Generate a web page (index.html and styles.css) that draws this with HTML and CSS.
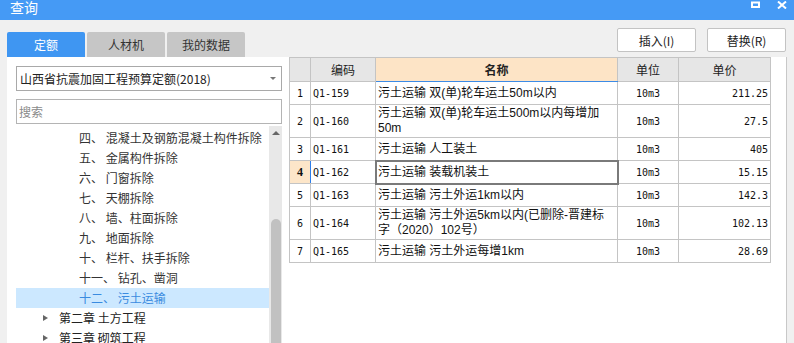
FILE: index.html
```html
<!DOCTYPE html>
<html lang="zh-CN">
<head>
    <meta charset="UTF-8">
    <title>查询</title>
    <link rel="stylesheet" href="styles.css">
</head>
<body>
    <div class="titlebar">
        <span class="title">查询</span>
        <div class="win-btns">
            <svg width="9" height="7" viewBox="0 0 9 7"><rect x="1" y="1.5" width="7" height="4.5" fill="none" stroke="#fff" stroke-width="2"/></svg>
            <svg width="10" height="8" viewBox="0 0 10 8"><path d="M1 0.5L9 7.5M9 0.5L1 7.5" stroke="#fff" stroke-width="2"/></svg>
        </div>
    </div>

    <div class="toolbar">
        <div class="tabs">
            <div class="tab on">定额</div>
            <div class="tab">人材机</div>
            <div class="tab">我的数据</div>
        </div>
        <div class="actions">
            <button type="button" class="btn">插入(I)</button>
            <button type="button" class="btn">替换(R)</button>
        </div>
    </div>

    <div class="main">
        <div class="left">
            <div class="select">
                <span>山西省抗震加固工程预算定额(2018)</span>
                <span class="select-arrow"></span>
            </div>
            <input class="search" type="text" placeholder="搜索">
            <div class="tree">
                <ul class="tree-list">
                    <li class="node sub">四、 混凝土及钢筋混凝土构件拆除</li>
                    <li class="node sub">五、 金属构件拆除</li>
                    <li class="node sub">六、 门窗拆除</li>
                    <li class="node sub">七、 天棚拆除</li>
                    <li class="node sub">八、 墙、柱面拆除</li>
                    <li class="node sub">九、 地面拆除</li>
                    <li class="node sub">十、 栏杆、扶手拆除</li>
                    <li class="node sub">十一、 钻孔、凿洞</li>
                    <li class="node sub sel">十二、 污土运输</li>
                    <li class="node chapter"><span class="caret"></span>第二章 土方工程</li>
                    <li class="node chapter"><span class="caret"></span>第三章 砌筑工程</li>
                </ul>
                <div class="scrollbar">
                    <span class="up"></span>
                    <span class="thumb"></span>
                </div>
            </div>
        </div>

        <div class="right">
            <table class="grid">
                <colgroup>
                    <col class="c-no">
                    <col class="c-code">
                    <col class="c-name">
                    <col class="c-unit">
                    <col class="c-price">
                </colgroup>
                <thead>
                    <tr>
                        <th></th>
                        <th>编码</th>
                        <th class="active-col">名称</th>
                        <th>单位</th>
                        <th>单价</th>
                    </tr>
                </thead>
                <tbody>
                    <tr>
                        <td class="no">1</td>
                        <td class="code">Q1-159</td>
                        <td class="name">污土运输 双(单)轮车运土50m以内</td>
                        <td class="unit">10m3</td>
                        <td class="price">211.25</td>
                    </tr>
                    <tr class="tall">
                        <td class="no">2</td>
                        <td class="code">Q1-160</td>
                        <td class="name">污土运输 双(单)轮车运土500m以内每增加<br>50m</td>
                        <td class="unit">10m3</td>
                        <td class="price">27.5</td>
                    </tr>
                    <tr>
                        <td class="no">3</td>
                        <td class="code">Q1-161</td>
                        <td class="name">污土运输 人工装土</td>
                        <td class="unit">10m3</td>
                        <td class="price">405</td>
                    </tr>
                    <tr class="current">
                        <td class="no">4</td>
                        <td class="code">Q1-162</td>
                        <td class="name">污土运输 装载机装土</td>
                        <td class="unit">10m3</td>
                        <td class="price">15.15</td>
                    </tr>
                    <tr>
                        <td class="no">5</td>
                        <td class="code">Q1-163</td>
                        <td class="name">污土运输 污土外运1km以内</td>
                        <td class="unit">10m3</td>
                        <td class="price">142.3</td>
                    </tr>
                    <tr class="tall">
                        <td class="no">6</td>
                        <td class="code">Q1-164</td>
                        <td class="name">污土运输 污土外运5km以内(已删除-晋建标<br>字（2020）102号）</td>
                        <td class="unit">10m3</td>
                        <td class="price">102.13</td>
                    </tr>
                    <tr>
                        <td class="no">7</td>
                        <td class="code">Q1-165</td>
                        <td class="name">污土运输 污土外运每增1km</td>
                        <td class="unit">10m3</td>
                        <td class="price">28.69</td>
                    </tr>
                </tbody>
            </table>
        </div>
    </div>
</body>
</html>
```

FILE: styles.css
```css
/* Reset */
* {
    margin: 0;
    padding: 0;
    box-sizing: border-box;
}

body {
    width: 794px;
    height: 343px;
    overflow: hidden;
    background: #f0f0f0;
    font-family: "Noto Sans CJK SC", "Liberation Sans", sans-serif;
    font-size: 12px;
    color: #222;
}

/* Window title bar */
.titlebar {
    display: flex;
    height: 20px;
    background: #459af5;
    color: #fff;
}

.title {
    padding-left: 10px;
    font-family: "Liberation Sans", "Noto Sans CJK SC", sans-serif;
    font-size: 14px;
    line-height: 16px;
}

.win-btns {
    display: flex;
    align-items: flex-start;
    gap: 17px;
    margin-left: auto;
    padding: 1px 7px 0 0;
}

/* Tabs + action buttons */
.toolbar {
    display: flex;
    justify-content: space-between;
    height: 37px;
    padding: 0 8px 0 7px;
}

.tabs {
    display: flex;
    gap: 2px;
    align-self: flex-end;
}

.tab {
    width: 78px;
    height: 25px;
    line-height: 25px;
    text-align: center;
    background: #c6c6c6;
    color: #333;
    border-radius: 2px 2px 0 0;
}

.tab.on {
    background: #3f96f2;
    color: #fff;
}

.actions {
    display: flex;
    gap: 11px;
    padding-top: 8px;
}

.btn {
    width: 79px;
    height: 24px;
    border: 1px solid #c3c3c3;
    border-radius: 2px;
    background: #fff;
    font-family: inherit;
    font-size: 12px;
    color: #222;
}

/* Main area */
.main {
    display: flex;
    height: 286px;
    padding-left: 7px;
}

.left {
    display: flex;
    flex-direction: column;
    width: 282px;
    padding: 9px 7px 0 9px;
    background: #fff;
}

.select {
    display: flex;
    align-items: center;
    justify-content: space-between;
    height: 25px;
    padding: 0 5px 0 3px;
    border: 1px solid #a9a9a9;
}

.select-arrow {
    border-left: 3px solid transparent;
    border-right: 3px solid transparent;
    border-top: 3px solid #777;
}

.search {
    height: 25px;
    margin-top: 8px;
    padding-left: 2px;
    border: 1px solid #b4b4b4;
    font-family: inherit;
    font-size: 12px;
    outline: none;
}

.search::placeholder {
    color: #8a8a8a;
}

.tree {
    display: flex;
    flex: 1;
    margin-top: 2px;
    overflow: hidden;
}

.tree-list {
    flex: 1;
    list-style: none;
    padding-top: 2px;
}

.node {
    height: 20px;
    line-height: 20px;
    white-space: pre;
    color: #333;
}

.node.sub {
    padding-left: 63px;
}

.node.sel {
    background: #cce8ff;
    color: #3a8be0;
}

.node.chapter {
    display: flex;
    align-items: center;
    padding-left: 27px;
    color: #222;
}

.caret {
    margin-right: 11px;
    border-top: 3.5px solid transparent;
    border-bottom: 3.5px solid transparent;
    border-left: 5px solid #666;
}

.scrollbar {
    display: flex;
    flex-direction: column;
    align-items: center;
    width: 13px;
    padding-top: 5px;
    background: #e8e8e8;
}

.up {
    border-left: 4px solid transparent;
    border-right: 4px solid transparent;
    border-bottom: 4px solid #666;
}

.thumb {
    flex: none;
    width: 10px;
    height: 160px;
    margin-top: 84px;
    border-radius: 5px;
    background: #c1c1c1;
}

/* Result grid */
.right {
    width: 498px;
    background: #fff;
    border-right: 1px solid #c8c8c8;
}

.grid {
    width: 481px;
    border-collapse: collapse;
    table-layout: fixed;
}

.c-no { width: 21px; }
.c-code { width: 65px; }
.c-name { width: 242px; }
.c-unit { width: 61px; }
.c-price { width: 92px; }

.grid th,
.grid td {
    border: 1px solid #c4c4c4;
    white-space: nowrap;
    overflow: hidden;
}

.grid thead tr {
    height: 24px;
}

.grid tbody tr {
    height: 23px;
}

.grid tbody tr.tall {
    height: 33px;
}

.grid th {
    background: #e6e6e6;
    font-weight: normal;
    font-size: 12px;
    color: #222;
}

.grid th.active-col {
    background: #fde4c6;
    border-bottom-color: #3c8be6;
    font-weight: bold;
}

.grid td {
    font-family: "DejaVu Sans Mono", "Noto Sans CJK SC", monospace;
    font-size: 10px;
    color: #111;
}

.grid .no {
    text-align: center;
}

.grid .code {
    padding-left: 2px;
}

.grid .name {
    padding-left: 2px;
    font-family: "Liberation Sans", "Noto Sans CJK SC", sans-serif;
    font-size: 12px;
    line-height: 15px;
}

.grid .unit {
    text-align: center;
}

.grid .price {
    padding-right: 2px;
    text-align: right;
}

.grid tr.current .no {
    background: #fde6c9;
    border-right-color: #2b7de9;
    font-family: "Liberation Serif", serif;
    font-size: 12px;
    font-weight: bold;
}

.grid tr.current .name {
    outline: 2px solid #7a7a7a;
    outline-offset: -1px;
}
```
